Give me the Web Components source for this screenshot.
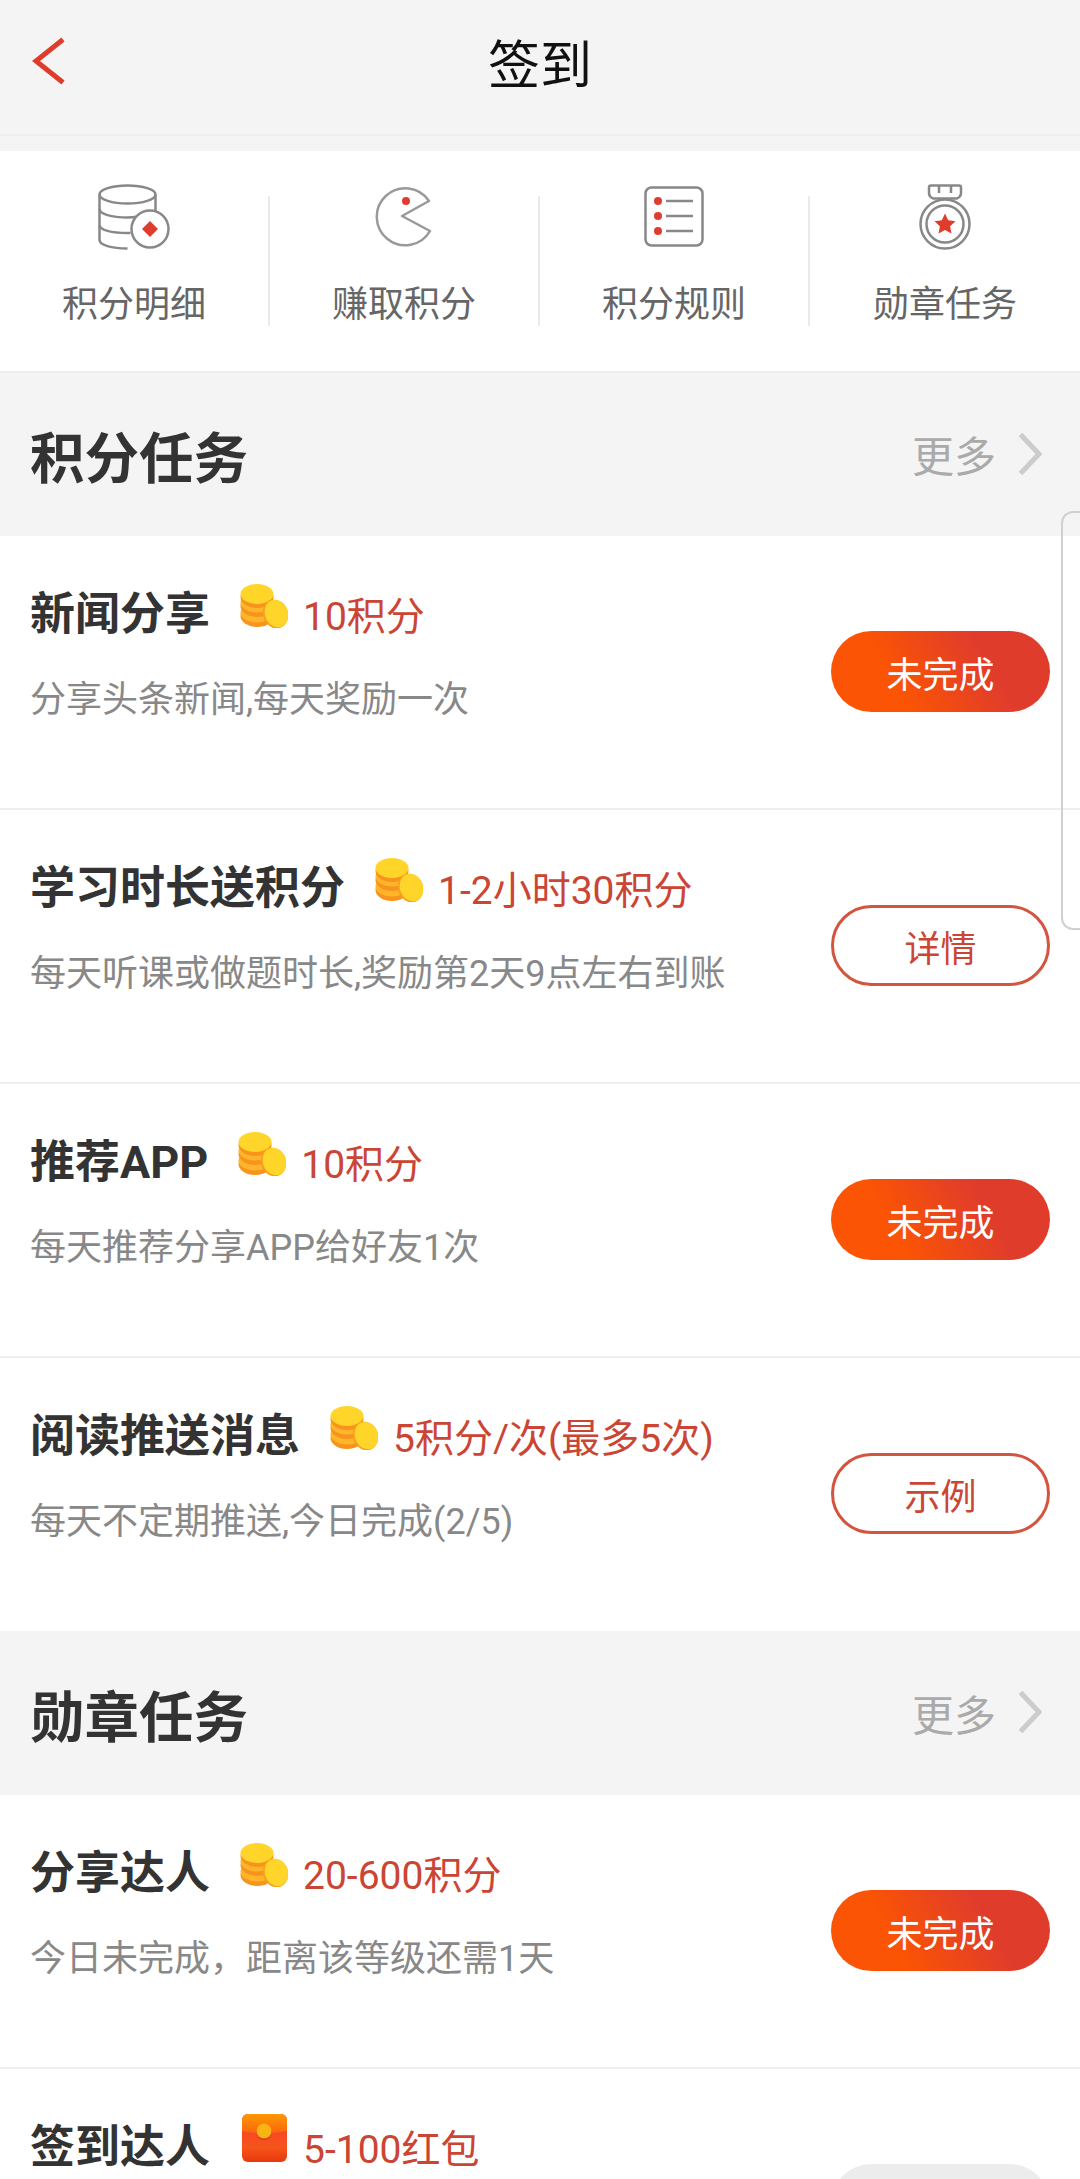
<!DOCTYPE html>
<html lang="zh">
<head>
<meta charset="utf-8">
<title>签到</title>
<style>
  html, body { margin: 0; height: 100%; overflow: hidden; background: #fff; }
  body { font-family: Roboto, "Noto Sans CJK SC", sans-serif; position: relative; }
</style>
</head>
<body>
<sign-header>签到</sign-header>

<nav-bar>
  <nav-item label="积分明细" icon="db"></nav-item>
  <nav-item label="赚取积分" icon="pac"></nav-item>
  <nav-item label="积分规则" icon="list"></nav-item>
  <nav-item label="勋章任务" icon="medal" last></nav-item>
</nav-bar>

<section-head>积分任务</section-head>
<task-row name="新闻分享" reward="10积分" desc="分享头条新闻,每天奖励一次" action="未完成"></task-row>
<task-row name="学习时长送积分" reward="1-2小时30积分" desc="每天听课或做题时长,奖励第2天9点左右到账" action="详情" outline></task-row>
<task-row name="推荐APP" reward="10积分" desc="每天推荐分享APP给好友1次" action="未完成"></task-row>
<task-row name="阅读推送消息" reward="5积分/次(最多5次)" desc="每天不定期推送,今日完成(2/5)" action="示例" outline last></task-row>

<section-head tall>勋章任务</section-head>
<task-row name="分享达人" reward="20-600积分" desc="今日未完成，距离该等级还需1天" action="未完成"></task-row>
<task-row name="签到达人" reward="5-100红包" icon="packet" muted></task-row>

<edge-handle></edge-handle>

<script>
  const ICONS = {
    db: `<svg width="72" height="66" viewBox="0 0 72 66" fill="none" stroke="#888" stroke-width="2.5">
      <ellipse cx="29.5" cy="10.5" rx="28" ry="9"/>
      <path d="M1.5 10.5V56c0 5 12 8.500 28 8.500"/>
      <path d="M57.500 10.500V30"/>
      <path d="M1.500 25c0 5 12 8.500 28 8.500c4 0 6-.2 9-.7"/>
      <path d="M1.500 41c0 5 12 8 28 8h3"/>
      <circle cx="52" cy="45" r="18.500" fill="#fff"/>
      <path d="M52 37l8 8-8 8-8-8z" fill="#e03c2c" stroke="none"/>
    </svg>`,
    pac: `<svg width="58" height="60" viewBox="0 0 58 60" fill="none" stroke="#999" stroke-width="2.500" stroke-linejoin="round" style="margin-left:-2px">
      <path d="M55 14A28.500 28.500 0 1 0 56 44L28 29Z"/>
      <circle cx="32" cy="14" r="4" fill="#e03c2c" stroke="none"/>
    </svg>`,
    list: `<svg width="60" height="62" viewBox="0 0 60 62" fill="none">
      <rect x="1.500" y="1.500" width="57" height="58" rx="6" stroke="#888" stroke-width="2.500"/>
      <g fill="#e03c2c"><circle cx="14" cy="15" r="4"/><circle cx="14" cy="30" r="4"/><circle cx="14" cy="45" r="4"/></g>
      <path d="M22 15h27M22 30h27M22 45h27" stroke="#888" stroke-width="2.500"/>
    </svg>`,
    medal: `<svg width="54" height="66" viewBox="0 0 54 66" fill="none" stroke="#888" stroke-width="2.500">
      <path d="M13 1.500h28c1.500 0 2 1 2 2v6c0 2-2 4-4 5H15c-2-1-4-3-4-5v-6c0-1 .5-2 2-2z" fill="#fff"/>
      <path d="M21 2v7M33 2v7"/>
      <circle cx="27" cy="40" r="24.500" fill="#fff"/>
      <circle cx="27" cy="40" r="18.500"/>
      <path d="M27 29.500l3.200 6.800 7.300.9-5.400 5 1.400 7.300-6.500-3.600-6.500 3.600 1.400-7.300-5.400-5 7.300-.9z" fill="#e03c2c" stroke="none"/>
    </svg>`,
    coin: `<svg width="48" height="44" viewBox="0 0 48 44">
      <ellipse cx="17" cy="32" rx="16.500" ry="11" fill="#f7941d"/>
      <ellipse cx="17" cy="28.500" rx="16.500" ry="10" fill="#ffb52a"/>
      <ellipse cx="17" cy="22" rx="16.500" ry="11" fill="#f7941d"/>
      <ellipse cx="17" cy="18.500" rx="16.500" ry="10" fill="#ffb52a"/>
      <ellipse cx="17" cy="13" rx="16.500" ry="11" fill="#f7941d"/>
      <ellipse cx="17" cy="10" rx="16.500" ry="10" fill="#ffd52a"/>
      <ellipse cx="35.500" cy="30" rx="12.500" ry="14.500" fill="#f7a01d" transform="rotate(-20 35.500 30)"/>
      <ellipse cx="36.500" cy="29.500" rx="11.500" ry="14" fill="#ffd52a" transform="rotate(-20 36.500 29.500)"/>
    </svg>`,
    packet: `<svg width="45" height="48" viewBox="0 0 45 48">
      <defs>
        <linearGradient id="flap" x1="0" y1="0" x2="0" y2="1"><stop offset="0" stop-color="#ff9a00"/><stop offset="1" stop-color="#f9640f"/></linearGradient>
        <linearGradient id="body" x1="0" y1="0" x2="0" y2="1"><stop offset="0" stop-color="#fb3a32"/><stop offset=".7" stop-color="#f5551a"/><stop offset="1" stop-color="#e8380f"/></linearGradient>
      </defs>
      <rect width="45" height="48" rx="6" fill="url(#body)"/>
      <path d="M0 17V6a6 6 0 0 1 6-6h33a6 6 0 0 1 6 6v11c-7 1.500-14 2-22.500 2S7 18.500 0 17z" fill="url(#flap)"/>
      <circle cx="22" cy="18.500" r="7.500" fill="#d93a16"/>
      <circle cx="22" cy="17" r="7.500" fill="#fbb313"/>
    </svg>`
  };

  // builds a class with markup in an open shadow root
  function define(tag, css, html) {
    customElements.define(tag, class extends HTMLElement {
      constructor() {
        super();
        this.attachShadow({ mode: 'open' });
      }
      connectedCallback() {
        const attr = (n) => this.getAttribute(n) || '';
        this.shadowRoot.innerHTML = `<style>${css}</style>${html(attr, this)}`;
      }
    });
  }

  define('app-icon', ':host { display: block; line-height: 0; }', (a) => ICONS[a('name')] || '');

  define('sign-header', `
    :host { display: block; padding-bottom: 15px; background: #f4f4f4; }
    .bar { box-sizing: border-box; height: 136px; border-bottom: 2px solid #eee; display: grid; grid-template-columns: 1fr auto 1fr; align-items: center; }
    .back { padding-left: 32px; line-height: 0; padding-bottom: 12px; }
    h1 { margin: 0 0 12px; font-weight: 400; font-size: 52px; color: #111; }
  `, () => `
    <div class="bar">
      <div class="back"><svg width="34" height="48" viewBox="0 0 34 48" fill="none" stroke="#e03c2c" stroke-width="5"><path d="M31 2.500L4 24l27 21.500"/></svg></div>
      <h1><slot></slot></h1>
      <div></div>
    </div>`);

  define('nav-bar', `
    :host { display: flex; height: 220px; background: #fff; border-bottom: 2px solid #eee; }
  `, () => `<slot></slot>`);

  define('nav-item', `
    :host { flex: 1; display: flex; min-width: 0; }
    .body { flex: 1; display: flex; flex-direction: column; align-items: center; padding-top: 33px; }
    .pic { height: 66px; display: flex; align-items: center; }
    .label { margin-top: 30px; font-size: 36px; line-height: 50px; color: #666; }
    .rule { width: 2px; height: 130px; margin-top: 45px; background: #eaeaea; }
  `, (a, el) => `
    <div class="body">
      <div class="pic"><app-icon name="${a('icon')}"></app-icon></div>
      <div class="label">${a('label')}</div>
    </div>
    ${el.hasAttribute('last') ? '' : '<div class="rule"></div>'}`);

  define('section-head', `
    :host { display: flex; align-items: center; justify-content: space-between; height: 163px; padding: 0 38px 0 30px; background: #f4f4f4; }
    :host([tall]) { height: 164px; }
    h2 { margin: 0; font-size: 54.5px; font-weight: 700; color: #333; }
    .more { display: flex; align-items: center; gap: 22px; font-size: 42px; color: #aaa; margin-top: -2px; }
    svg { display: block; }
  `, () => `
    <h2><slot></slot></h2>
    <div class="more">更多<svg width="24" height="44" viewBox="0 0 24 44" fill="none" stroke="#ccc" stroke-width="5"><path d="M2.500 2.500L21 22 2.500 41.500"/></svg></div>`);

  define('pill-button', `
    :host { display: flex; align-items: center; justify-content: center; box-sizing: border-box; width: 219px; height: 81px; border-radius: 41px; font-size: 36px; }
    :host([kind="solid"]) { color: #fff; background: linear-gradient(60deg, #fb5404 30%, #e03c2c 70%); }
    :host([kind="outline"]) { color: #cb4534; border: 3px solid #d3543f; background: #fff; }
    :host([kind="muted"]) { background: #ececec; }
  `, () => `<slot></slot>`);

  define('task-row', `
    :host { display: flex; box-sizing: border-box; height: 274px; padding: 0 30px; background: #fff; border-bottom: 2px solid #eee; }
    :host([last]) { border-bottom: 0; height: 273px; }
    .main { flex: 1; min-width: 0; }
    .top { display: flex; align-items: flex-start; height: 113px; }
    .name { margin-top: 53px; font-size: 45px; line-height: 52px; font-weight: 700; color: #333; }
    .pic { margin: 48px 15px 0 30px; }
    .pic.packet { margin: 45px 16px 0 32px; }
    .reward { margin-top: 56px; font-size: 39px; line-height: 50px; color: #cb4534; }
    .desc { margin-top: 26px; font-size: 36px; line-height: 50px; color: #888; }
    pill-button { margin-top: 95px; }
  `, (a, el) => {
    const icon = a('icon') || 'coin';
    const kind = el.hasAttribute('muted') ? 'muted' : el.hasAttribute('outline') ? 'outline' : 'solid';
    return `
    <div class="main">
      <div class="top">
        <div class="name">${a('name')}</div>
        <div class="pic ${icon}"><app-icon name="${icon}"></app-icon></div>
        <div class="reward">${a('reward')}</div>
      </div>
      ${a('desc') ? `<div class="desc">${a('desc')}</div>` : ''}
    </div>
    <pill-button kind="${kind}">${a('action')}</pill-button>`;
  });

  // floating edge panel handle, sits over the page
  define('edge-handle', `
    :host { position: absolute; top: 511px; right: 0; width: 17px; height: 415px; border: 2px solid #d0d0d0; border-right: 0; border-radius: 12px 0 0 12px; }
  `, () => ``);
</script>
</body>
</html>
